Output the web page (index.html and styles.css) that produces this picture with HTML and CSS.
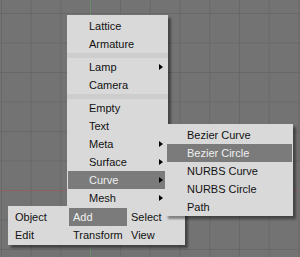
FILE: index.html
```html
<!DOCTYPE html>
<html lang="en">

<head>
    <meta charset="UTF-8">
    <title>Add menu</title>
    <link rel="stylesheet" href="styles.css">
</head>

<body>
    <div class="viewport">
        <!-- 坐标轴 -->
        <div class="axis axis-x"></div>
        <div class="axis axis-y"></div>

        <!-- Add 弹出菜单 -->
        <div class="menu menu-add">
            <div class="item">Lattice</div>
            <div class="item">Armature</div>
            <div class="sep"></div>
            <div class="item sub">Lamp</div>
            <div class="item">Camera</div>
            <div class="sep"></div>
            <div class="item">Empty</div>
            <div class="item">Text</div>
            <div class="item sub">Meta</div>
            <div class="item sub">Surface</div>
            <div class="item sub active">Curve</div>
            <div class="item sub">Mesh</div>
        </div>

        <!-- 底部菜单栏 -->
        <div class="menu menu-bar">
            <div class="cell">Object</div>
            <div class="cell active">Add</div>
            <div class="cell">Select</div>
            <div class="cell">Edit</div>
            <div class="cell">Transform</div>
            <div class="cell">View</div>
        </div>

        <!-- Curve 子菜单 -->
        <div class="menu menu-curve">
            <div class="item">Bezier Curve</div>
            <div class="item active">Bezier Circle</div>
            <div class="item">NURBS Curve</div>
            <div class="item">NURBS Circle</div>
            <div class="item">Path</div>
        </div>
    </div>
</body>

</html>
```

FILE: styles.css
```css
body {
    margin: 0;
    background: #737373;
    font-family: "Liberation Sans", Arial, sans-serif;
    font-size: 11px;
}

/* 3D 视图背景和网格 */
.viewport {
    position: relative;
    width: 300px;
    height: 257px;
    overflow: hidden;
    background-color: #737373;
    background-image:
        linear-gradient(to right, #686868 1px, transparent 1px),
        linear-gradient(to bottom, #686868 1px, transparent 1px);
    background-size: 29.75px 100%, 100% 29.5px;
    background-position: 1px 0, 0 13px;
}

.axis {
    position: absolute;
}

.axis-x {
    left: 0;
    right: 0;
    top: 190px;
    height: 1px;
    background: #8a6262;
}

.axis-y {
    top: 0;
    bottom: 0;
    left: 90px;
    width: 1px;
    background: #6b8a6b;
}

/* 弹出菜单通用样式 */
.menu {
    position: absolute;
    box-sizing: border-box;
    background: #d9d9d9;
    color: #111;
    box-shadow: 3px 3px 2px rgba(0, 0, 0, 0.4);
}

.item {
    display: flex;
    align-items: center;
    justify-content: space-between;
    height: 18px;
    line-height: 18px;
}

.active {
    background: #7b7b7b;
    color: #f0f0f0;
}

.sep {
    height: 5px;
    background: #cdcdcd;
}

/* 子菜单箭头 */
.sub::after {
    content: "";
    border-left: 4px solid #000;
    border-top: 3px solid transparent;
    border-bottom: 3px solid transparent;
}

.menu-add {
    left: 67px;
    top: 15px;
    width: 101px;
    height: 194px;
    padding-top: 2px;
    z-index: 1;
}

.menu-add .item {
    margin: 0 2px 0 1px;
    padding: 0 3px 0 21px;
}

.menu-bar {
    left: 8px;
    top: 206px;
    width: 177px;
    height: 39px;
    padding: 2px 0 1px 3px;
    display: grid;
    grid-template-columns: 58px 58px 1fr;
    grid-auto-rows: 18px;
    z-index: 2;
}

.cell {
    padding-left: 4px;
    line-height: 18px;
}

.menu-curve {
    left: 165px;
    top: 124px;
    width: 128px;
    height: 92px;
    padding-top: 2px;
    z-index: 3;
}

.menu-curve .item {
    margin: 0 1px 0 2px;
    padding-left: 20px;
}
```
